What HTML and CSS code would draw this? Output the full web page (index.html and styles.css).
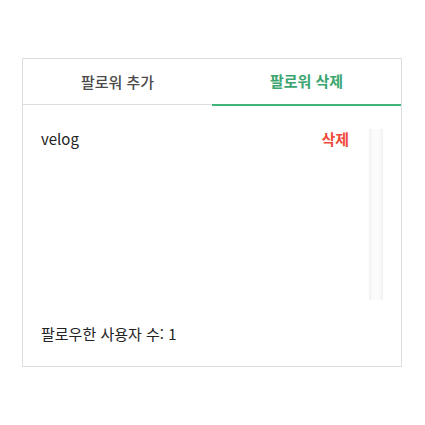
FILE: index.html
```html
<!DOCTYPE html>
<html lang="ko">
<head>
<meta charset="utf-8">
<title>팔로워</title>
<link rel="stylesheet" href="styles.css">
</head>
<body>
<div class="card">
  <div class="tabs">
    <div class="tab">팔로워 추가</div>
    <div class="tab active">팔로워 삭제</div>
  </div>
  <div class="content">
    <div class="list">
      <div class="row">
        <span class="name">velog</span>
        <span class="delete">삭제</span>
      </div>
    </div>
    <div class="track"></div>
  </div>
  <div class="footer">팔로우한 사용자 수: 1</div>
</div>
</body>
</html>
```
FILE: styles.css
```css
* { box-sizing: border-box; }
html, body { margin: 0; padding: 0; background: #fff; }
body {
  height: 425px;
  display: flex;
  align-items: center;
  justify-content: flex-start;
  padding-left: 22px;
  font-family: "Noto Sans CJK KR", "Noto Sans", sans-serif;
  color: #222;
}
.card {
  width: 380px;
  height: 309px;
  border: 1px solid #dedede;
  display: flex;
  flex-direction: column;
}
.tabs {
  display: flex;
  align-items: flex-start;
  height: 47px;
}
.tab {
  flex: 1;
  height: 46px;
  padding-bottom: 1px;
  border-bottom: 1px solid #dedede;
  display: flex;
  align-items: center;
  justify-content: center;
  font-size: 15px;
  font-weight: 500;
  color: #4a4a4a;
}
.tab.active {
  height: 47px;
  padding-bottom: 2px;
  border-bottom: 2px solid #40b57a;
  color: #3aa56e;
  font-weight: 700;
}
.content {
  display: flex;
  padding: 23px 18px 0 18px;
  height: 194px;
}
.list { flex: 1; padding-right: 20px; }
.row {
  display: flex;
  justify-content: space-between;
  align-items: center;
  height: 22px;
  margin-top: -2px;
}
.name { font-size: 15px; color: #222; }
.delete { font-size: 15px; font-weight: 700; color: #ef4a3b; }
.track {
  width: 14px;
  height: 171px;
  background: linear-gradient(to right, #f1f1f1, #fafafa 25%, #fcfcfc 50%, #fafafa 75%, #f1f1f1);
}
.footer {
  padding: 23px 18px 0 18px;
  font-size: 15px;
  line-height: 22px;
  color: #222;
}
```
